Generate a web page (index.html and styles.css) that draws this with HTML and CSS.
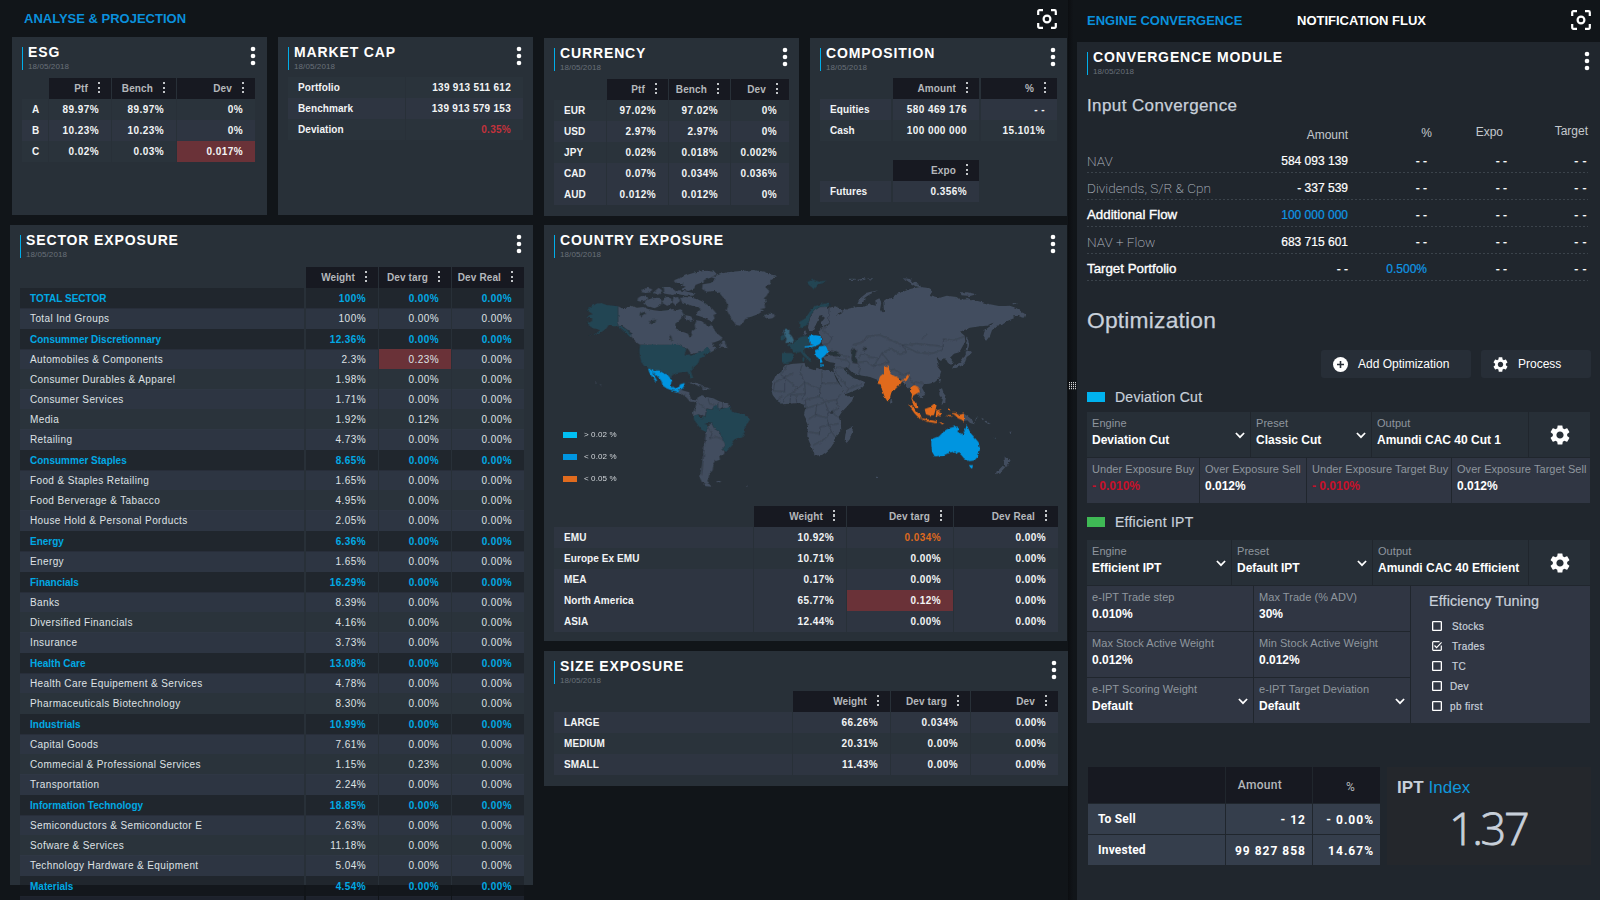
FILE: index.html
```html
<!DOCTYPE html>
<html lang="en">
<head>
<meta charset="utf-8">
<title>Analyse &amp; Projection</title>
<link rel="stylesheet" href="styles.css">
</head>
<body>
<svg class="defs" width="0" height="0" aria-hidden="true">
  <symbol id="focus" viewBox="0 0 20 20"><path d="M1.2 6V2.4A1.2 1.2 0 0 1 2.4 1.2H6M14 1.2h3.6a1.2 1.2 0 0 1 1.2 1.2V6M18.8 14v3.6a1.2 1.2 0 0 1-1.2 1.2H14M6 18.8H2.4a1.2 1.2 0 0 1-1.2-1.2V14" fill="none" stroke="#fff" stroke-width="2.2"/><circle cx="10" cy="10" r="3.4" fill="none" stroke="#fff" stroke-width="2.2"/></symbol>
  <symbol id="more" viewBox="0 0 6 20"><circle cx="3" cy="3" r="2.3" fill="#fff"/><circle cx="3" cy="10" r="2.3" fill="#fff"/><circle cx="3" cy="17" r="2.3" fill="#fff"/></symbol>
  <symbol id="gear" viewBox="2 2 20 20"><path fill="#fff" d="M19.14 12.94c.04-.3.06-.61.06-.94 0-.32-.02-.64-.07-.94l2.03-1.58c.18-.14.23-.41.12-.61l-1.92-3.32c-.12-.22-.37-.29-.59-.22l-2.39.96c-.5-.38-1.03-.7-1.62-.94l-.36-2.54c-.04-.24-.24-.41-.48-.41h-3.84c-.24 0-.43.17-.47.41l-.36 2.54c-.59.24-1.13.57-1.62.94l-2.39-.96c-.22-.08-.47 0-.59.22L2.74 8.87c-.12.21-.08.47.12.61l2.03 1.58c-.05.3-.09.63-.09.94s.02.64.07.94l-2.03 1.58c-.18.14-.23.41-.12.61l1.92 3.32c.12.22.37.29.59.22l2.39-.96c.5.38 1.03.7 1.62.94l.36 2.54c.05.24.24.41.48.41h3.84c.24 0 .44-.17.47-.41l.36-2.54c.59-.24 1.13-.56 1.62-.94l2.39.96c.22.08.47 0 .59-.22l1.92-3.32c.12-.22.07-.47-.12-.61l-2.01-1.58zM12 15.6c-1.98 0-3.6-1.62-3.6-3.6s1.62-3.6 3.6-3.6 3.6 1.62 3.6 3.6-1.62 3.6-3.6 3.6z"/></symbol>
  <symbol id="chev" viewBox="0 0 10 7"><path d="M.9 1 5 5.2 9.1 1" fill="none" stroke="#fff" stroke-width="1.7"/></symbol>
  <symbol id="box" viewBox="0 0 10 10"><rect x=".65" y=".65" width="8.7" height="8.7" rx=".6" fill="none" stroke="#fff" stroke-width="1.3"/></symbol>
  <symbol id="boxon" viewBox="0 0 10 10"><path d="M9.3 4.6v4.1a.6.6 0 0 1-.6.6H1.3a.6.6 0 0 1-.6-.6V1.3a.6.6 0 0 1 .6-.6h6.2M2.5 4.5 4.6 6.7 9.6 1.4" fill="none" stroke="#fff" stroke-width="1.2"/></symbol>
</svg>

<main class="left">
  <header class="top"><h1>ANALYSE &amp; PROJECTION</h1><svg class="focus"><use href="#focus"/></svg></header>
  <div class="cols">
    <div class="colA">
      <div class="pair pairA">
        <section class="panel esg">
          <div class="ph"><div class="tt"><h2>ESG</h2><p>18/05/2018</p></div><svg class="more"><use href="#more"/></svg></div>
          <div class="tbl">
            <div class="r hd"><span></span><span>Ptf<i></i></span><span>Bench<i></i></span><span>Dev<i></i></span></div>
            <div class="r d"><span>A</span><span>89.97%</span><span>89.97%</span><span>0%</span></div>
            <div class="r l"><span>B</span><span>10.23%</span><span>10.23%</span><span>0%</span></div>
            <div class="r d"><span>C</span><span>0.02%</span><span>0.03%</span><span class="alert">0.017%</span></div>
          </div>
        </section>
        <section class="panel mcap">
          <div class="ph"><div class="tt"><h2>MARKET CAP</h2><p>18/05/2018</p></div><svg class="more"><use href="#more"/></svg></div>
          <div class="tbl">
            <div class="r d"><span>Portfolio</span><span>139 913 511 612</span></div>
            <div class="r l"><span>Benchmark</span><span>139 913 579 153</span></div>
            <div class="r d"><span>Deviation</span><span class="neg">0.35%</span></div>
          </div>
        </section>
      </div>
      <section class="panel sector">
        <div class="ph"><div class="tt"><h2>SECTOR EXPOSURE</h2><p>18/05/2018</p></div><svg class="more"><use href="#more"/></svg></div>
        <div class="tbl">
          <div class="r hd"><span></span><span>Weight<i></i></span><span>Dev targ<i></i></span><span>Dev Real<i></i></span></div>
          <div class="r s"><span>TOTAL SECTOR</span><span>100%</span><span>0.00%</span><span>0.00%</span></div>
          <div class="r l"><span>Total Ind Groups</span><span>100%</span><span>0.00%</span><span>0.00%</span></div>
          <div class="r s"><span>Consummer Discretionnary</span><span>12.36%</span><span>0.00%</span><span>0.00%</span></div>
          <div class="r l"><span>Automobiles &amp; Components</span><span>2.3%</span><span class="alert">0.23%</span><span>0.00%</span></div>
          <div class="r d"><span>Consumer Durables &amp; Apparel</span><span>1.98%</span><span>0.00%</span><span>0.00%</span></div>
          <div class="r l"><span>Consumer Services</span><span>1.71%</span><span>0.00%</span><span>0.00%</span></div>
          <div class="r d"><span>Media</span><span>1.92%</span><span>0.12%</span><span>0.00%</span></div>
          <div class="r l"><span>Retailing</span><span>4.73%</span><span>0.00%</span><span>0.00%</span></div>
          <div class="r s"><span>Consummer Staples</span><span>8.65%</span><span>0.00%</span><span>0.00%</span></div>
          <div class="r l"><span>Food &amp; Staples Retailing</span><span>1.65%</span><span>0.00%</span><span>0.00%</span></div>
          <div class="r d"><span>Food Berverage &amp; Tabacco</span><span>4.95%</span><span>0.00%</span><span>0.00%</span></div>
          <div class="r l"><span>House Hold &amp; Personal Porducts</span><span>2.05%</span><span>0.00%</span><span>0.00%</span></div>
          <div class="r s"><span>Energy</span><span>6.36%</span><span>0.00%</span><span>0.00%</span></div>
          <div class="r l"><span>Energy</span><span>1.65%</span><span>0.00%</span><span>0.00%</span></div>
          <div class="r s"><span>Financials</span><span>16.29%</span><span>0.00%</span><span>0.00%</span></div>
          <div class="r l"><span>Banks</span><span>8.39%</span><span>0.00%</span><span>0.00%</span></div>
          <div class="r d"><span>Diversified Financials</span><span>4.16%</span><span>0.00%</span><span>0.00%</span></div>
          <div class="r l"><span>Insurance</span><span>3.73%</span><span>0.00%</span><span>0.00%</span></div>
          <div class="r s"><span>Health Care</span><span>13.08%</span><span>0.00%</span><span>0.00%</span></div>
          <div class="r l"><span>Health Care Equipement &amp; Services</span><span>4.78%</span><span>0.00%</span><span>0.00%</span></div>
          <div class="r d"><span>Pharmaceuticals Biotechnology</span><span>8.30%</span><span>0.00%</span><span>0.00%</span></div>
          <div class="r s"><span>Industrials</span><span>10.99%</span><span>0.00%</span><span>0.00%</span></div>
          <div class="r l"><span>Capital Goods</span><span>7.61%</span><span>0.00%</span><span>0.00%</span></div>
          <div class="r d"><span>Commecial &amp; Professional Services</span><span>1.15%</span><span>0.23%</span><span>0.00%</span></div>
          <div class="r l"><span>Transportation</span><span>2.24%</span><span>0.00%</span><span>0.00%</span></div>
          <div class="r s"><span>Information Technology</span><span>18.85%</span><span>0.00%</span><span>0.00%</span></div>
          <div class="r l"><span>Semiconductors &amp; Semiconductor E</span><span>2.63%</span><span>0.00%</span><span>0.00%</span></div>
          <div class="r d"><span>Sofware &amp; Services</span><span>11.18%</span><span>0.00%</span><span>0.00%</span></div>
          <div class="r l"><span>Technology Hardware &amp; Equipment</span><span>5.04%</span><span>0.00%</span><span>0.00%</span></div>
          <div class="r s"><span>Materials</span><span>4.54%</span><span>0.00%</span><span>0.00%</span></div>
          <div class="r l"><span></span><span></span><span></span><span></span></div>
        </div>
      </section>
    </div>

    <div class="colB">
      <div class="pair">
        <section class="panel cur">
          <div class="ph"><div class="tt"><h2>CURRENCY</h2><p>18/05/2018</p></div><svg class="more"><use href="#more"/></svg></div>
          <div class="tbl">
            <div class="r hd"><span></span><span>Ptf<i></i></span><span>Bench<i></i></span><span>Dev<i></i></span></div>
            <div class="r d"><span>EUR</span><span>97.02%</span><span>97.02%</span><span>0%</span></div>
            <div class="r l"><span>USD</span><span>2.97%</span><span>2.97%</span><span>0%</span></div>
            <div class="r d"><span>JPY</span><span>0.02%</span><span>0.018%</span><span>0.002%</span></div>
            <div class="r l"><span>CAD</span><span>0.07%</span><span>0.034%</span><span>0.036%</span></div>
            <div class="r l"><span>AUD</span><span>0.012%</span><span>0.012%</span><span>0%</span></div>
          </div>
        </section>
        <section class="panel comp">
          <div class="ph"><div class="tt"><h2>COMPOSITION</h2><p>18/05/2018</p></div><svg class="more"><use href="#more"/></svg></div>
          <div class="tbl">
            <div class="r hd"><span></span><span>Amount<i></i></span><span>%<i></i></span></div>
            <div class="r l"><span>Equities</span><span>580 469 176</span><span>- -</span></div>
            <div class="r d"><span>Cash</span><span>100 000 000</span><span>15.101%</span></div>
          </div>
          <div class="tbl expo">
            <div class="r hd"><span></span><span>Expo<i></i></span></div>
            <div class="r l"><span>Futures</span><span class="fut">0.356%</span></div>
          </div>
        </section>
      </div>

      <section class="panel country">
        <div class="ph"><div class="tt"><h2>COUNTRY EXPOSURE</h2><p>18/05/2018</p></div><svg class="more"><use href="#more"/></svg></div>
        <div class="map">
          <svg class="world" viewBox="0 0 1380 690">
            <filter id="coast" x="0" y="0" width="1" height="1"><feTurbulence type="fractalNoise" baseFrequency=".09" numOctaves="2" seed="4"/><feDisplacementMap in="SourceGraphic" scale="9" xChannelSelector="R" yChannelSelector="G"/></filter>
            <g filter="url(#coast)">
              <g class="land">
                <path d="M114 124 126 130 140 128 158 122 170 128 190 126 204 132 222 136 240 138 262 136 278 132 290 136 302 132 312 150 304 160 296 168 286 176 286 188 296 196 312 202 324 206 330 218 336 210 334 200 346 192 344 180 350 166 364 168 376 176 384 186 392 178 400 188 408 202 420 212 428 218 420 226 404 232 394 234 402 238 398 246 410 250 400 258 388 264 384 252 370 260 350 264 332 268 330 260 322 250 308 246 296 240 180 239 166 230 160 222 152 212 154 204 142 194 128 184 114 182Z"/>
                <path d="M422 236l10-10 6 12 4 12-12-2-10 0zM174 98 190 92 206 98 200 104 184 110 172 108ZM198 106 216 100 236 98 246 108 240 122 224 130 204 124 190 116ZM186 74 200 68 216 72 214 82 198 84 184 82ZM222 80l14-12 10 8-4 12-16 2zM250 66l20 0 14 10 10 10-16 4-24-4zM250 100l12-5 12 6 0 14-12 8-14-8zM282 46 300 38 320 30 346 22 376 17 404 20 410 28 392 38 374 44 362 54 346 60 344 70 326 78 306 74 316 64 300 62 310 54 290 54ZM284 80l16-4 20 4 26 4-6 8-24 0-20-4zM300 98 316 96 336 98 356 104 372 112 386 122 398 132 410 146 400 150 404 160 396 170 380 162 366 156 346 150 352 140 362 134 350 126 336 122 322 118 306 112ZM280 98l14-2 6 12-14 12-10-8zM314 150l18 4 10 10-14 4-14-8z"/>
                <path d="M368 58 392 54 406 42 394 36 420 28 440 22 480 18 520 15 556 20 560 26 580 30 592 34 572 40 570 56 556 66 568 78 560 92 552 100 558 110 554 120 556 130 540 132 552 136 534 148 512 156 500 158 488 172 480 182 468 180 456 164 448 150 440 136 444 122 438 110 428 96 418 84 404 78 380 80 366 72ZM552 150l8-4 20 0 6 6-8 8-14 2-8-4z"/>
                <path d="M292 380l10-6 12 4 14 4 0 12 6 10 14 2 8 2-4 8-10-6-12 0-10-12-14-10zM326 354l14-3 24 8 8 6-18-1-14-6zM366 366l22 2 4 5-24 0zM46 352l6 3 0 3-6-3zM56 358l8 4 0 3-6-4z"/>
                <path d="M352 398 366 390 378 396 400 400 416 408 428 412 444 418 450 426 440 432 428 426 416 434 402 424 396 434 380 430 376 450 372 456 356 448 340 456 338 442 346 430 350 412Z"/>
                <path d="M384 480 396 476 404 492 418 500 424 514 434 528 436 542 428 552 434 560 432 568 418 574 420 584 408 588 400 600 398 616 388 628 386 640 382 648 388 654 380 658 366 652 360 640 362 624 366 600 370 560 374 530 378 504ZM370 657l18 0 8 8-20-1zM410 648l12 0 0 4-12 0zM498 660l5 2-1 4-4-2z"/>
                <g transform="translate(570)">
                  <path d="M46 300 70 296 104 294 106 304 116 310 134 316 140 308 156 314 184 318 190 322 200 346 214 366 224 386 232 394 252 392 246 408 230 426 216 440 206 456 212 472 214 496 200 510 194 520 190 536 182 548 168 562 156 570 134 572 130 560 122 540 112 516 112 500 116 480 110 466 102 450 106 432 98 418 84 414 62 416 38 418 22 408 8 390 4 376 8 350 16 334 34 320 40 306ZM228 496l14-8 6-6 0 14-8 26-10 12-6-8 2-16z"/>
                  <path d="M116 176 122 152 134 136 150 126 166 122 178 130 182 160 176 176 158 184 154 172 164 160 156 150 148 152 142 170 134 186 128 198 118 198 114 188ZM98 202l8-6 4 10-8 6zM92 246l12-2 6 8-12 2zM118 232l14 4-12 6z"/>
                  <path d="M178 128 196 124 216 134 220 140 206 144 198 152 214 146 222 136 240 130 262 126 280 126 300 118 318 122 316 106 328 100 334 112 330 136 342 140 340 112 350 104 366 98 380 86 400 80 420 72 450 66 470 68 484 76 480 90 510 98 530 92 560 96 570 104 600 102 632 110 660 118 690 124 720 122 740 130 766 148 762 158 746 154 730 150 732 160 712 168 696 180 680 182 666 196 660 212 648 228 640 214 644 196 660 184 672 172 650 182 630 184 600 188 570 200 584 212 586 230 578 244 568 262 552 266 540 278 548 290 544 300 534 294 526 280 512 284 500 280 506 296 502 304 514 320 508 340 494 352 478 356 462 358 456 368 466 386 458 400 446 396 440 386 448 378 434 360 424 362 414 374 406 358 396 350 390 340 350 330 326 346 300 336 264 330 244 320 230 306 220 312 236 328 252 340 268 344 286 352 276 366 256 376 226 388 214 366 204 344 192 324 190 310 196 294 180 292 164 284 160 276 176 272 166 266 172 256 166 244 156 238 154 216 148 206 150 190 164 184 180 176Z"/>
                  <path d="M262 116 272 98 290 84 324 76 300 88 284 98 280 112 272 118ZM400 40l20 2 8 10 20 4 6 12-20-6-16-10zM572 82l20 0 28 6-20 5-26-2zM586 98l14 2-10 3zM234 41l20 0 0 4-20 0zM262 44l24-4 0 4-22 4zM290 40l20 0-6 4zM728 114l14 1 0 3-14 0zM0 34l18-4-12 14-6 0z"/>
                  <path d="M590 260l10-2 4 8-14 10-6 20-12 8-14 4-12 2 8-11 16-6 10-14zM588 214l7 12 2 16-4 14-6 4 2-20zM508 342l5 0-3 12-4-4zM508 372l8-2 6 16 6 8-2 18-12 4 4-10-10-16zM362 402l5 6-2 10-5-4zM582 446 596 456 606 464 614 478 600 474 592 466 582 468ZM614 458l12 0-10 6zM634 458l8 4-4 4zM646 466l16 10-6 2-12-8zM670 514l8 6-2 2zM718 500l8 0-4 8zM704 574l8 10 10 2-8 14-8 6-2-10zM698 602l8 4-14 16-14 6 2-6zM318 635l7 0 0 4-7 0z"/>
                </g>
              </g>
              <g class="teal">
                <path d="M20 135 30 133 24 128 40 122 48 116 64 114 80 120 114 124 114 182 128 186 142 196 154 210 150 216 138 204 126 192 112 184 96 184 86 180 80 190 66 200 50 208 24 212 46 206 60 196 50 192 38 190 28 182 24 174 36 168 36 160 20 158 28 150 38 148Z"/>
                <path d="M180 239 296 239 308 246 320 250 316 262 314 272 326 268 332 272 352 264 370 258 378 250 388 248 390 258 378 268 370 276 360 280 356 292 350 300 340 308 332 316 336 330 340 338 332 342 326 328 322 320 306 322 290 324 278 330 272 338 264 328 252 322 238 316 220 316 204 310 192 304 184 290 180 276 178 258Z"/>
                <path d="M340 452 354 448 360 456 374 456 362 466 372 476 384 480 382 496 380 502 364 494 352 478 342 464ZM376 456 380 432 398 434 402 422 414 420 416 434 430 430 444 428 450 422 456 440 474 444 490 448 506 456 510 464 500 478 494 488 494 504 486 518 470 520 460 530 456 542 446 552 438 562 428 552 438 540 430 528 424 512 418 500 404 492 396 476 382 474 372 478 362 466ZM602 214l10-6 4 8-6 10-8 0z"/>
                <g transform="translate(570)"><path d="M112 50 130 44 148 50 168 46 160 54 146 58 132 74 124 66 116 60ZM88 170 106 160 118 142 132 124 150 118 176 114 182 120 166 126 150 126 134 136 122 150 116 170 110 180 98 190 88 186ZM92 216 106 212 118 216 118 236 108 244 100 258 86 262 70 262 66 250 50 240 66 236 78 228 84 220ZM36 264l30 0 6 8-8 18-14 4-14-2zM88 256 102 252 104 264 118 278 124 282 120 290 112 282 100 272 94 264ZM98 276l6 2-2 12-5-2z"/></g>
              </g>
              <path class="uk" d="M610 196l8-6 12 6-4 8 10 10 6 12-4 6-22 2 4-12-6-10z"/>
              <g class="sea"><path d="M742 260 756 256 770 262 786 272 766 274 746 270ZM812 256 824 250 832 256 828 264 826 276 832 286 832 296 818 294 814 280 816 270ZM178 146l16-6 4 6-14 8zM206 170l22-6-4 8-16 4zM268 210l6 4 2 14-6-8zM848 250l8-4 4 8-8 2zM750 440l10-4 4 8-12 4z"/></g>
              <g class="blue">
                <path d="M204 310 220 316 238 316 250 324 262 328 270 338 276 348 272 356 276 366 286 370 296 368 300 358 314 354 312 364 306 372 298 376 292 380 276 376 260 370 248 362 244 348 236 338 226 328 220 320 224 334 232 348 228 350 216 336 208 322Z"/>
                <g transform="translate(570)"><path d="M118 212 136 210 152 214 154 230 148 238 140 242 122 248 104 248 104 244 118 242 132 238 118 232ZM148 244 164 242 174 256 168 268 160 276 154 280 158 292 150 294 146 280 138 274 134 256 144 252ZM150 298l12 1 0 4-12-1z"/>
                <path d="M484 522 500 516 514 510 522 498 536 490 544 488 556 484 568 486 562 500 578 508 584 498 590 480 596 492 602 504 614 518 626 532 630 552 624 574 614 586 598 588 582 580 572 568 566 566 556 560 540 562 520 572 494 574 486 560 484 540ZM597 600l12 0-2 10-7 1z"/></g>
              </g>
              <g class="orange" transform="translate(570)"><path d="M342 304 356 302 358 318 368 330 388 340 392 348 404 340 414 328 420 330 408 350 400 344 392 356 376 372 364 382 360 398 352 408 344 396 336 374 332 358 322 356 326 346 330 334 342 324ZM422 364 434 360 448 368 450 380 436 388 430 392 426 404 440 414 442 430 432 424 424 404 426 388 420 376ZM414 418 430 426 444 444 456 458 450 462 434 446ZM452 459 474 463 500 469 500 475 470 470ZM504 472l20 1-6 5zM464 432 480 426 494 414 500 420 496 436 492 450 480 452 468 448ZM499 436l16-3-8 9 8 4-6 9-6-5-2 8-4 0zM534 430l4 2 0 8-4-2zM530 450l14 0 0 4-14 0zM546 444l12 0 8 6 16-4 0 24-8-6-10-4-8-8z"/></g>
              <g class="border"><path d="M378 504 374 540 370 590 366 630M388 520l22-4 20 8M384 486l12 20-6 16M416 410l-4 18M428 412l0 16M384 398l4 18 20 4M356 412l20 18M318 386l-8 8"/>
              <g transform="translate(570)"><path d="M50 300 44 316 32 328 84 370M70 324 14 352 10 378 44 380 44 336M84 370 66 384 46 394 40 412M84 370 104 352 90 320 96 300M104 352 150 372 156 356 156 316M156 354 206 354M104 352 106 386 96 404M106 386 62 390 60 414M150 372 148 394 106 404M148 394 164 410 200 404 212 386M106 404 108 430 140 420 164 412M140 420 136 450 116 462M136 450 170 458 176 440 166 414M170 458 176 480 150 486 148 510M112 500 150 506M176 480 206 476M176 480 184 500 166 520 150 530 130 540M184 500 196 516M176 440 206 456M200 404 206 430 184 440M22 408 36 392M78 392 80 414M200 306 226 310 240 330M200 306 196 320 236 372 276 356M236 372 228 384M238 296 236 310M264 330 272 310 262 292 290 290 310 304 340 296 358 292 336 264 364 250 390 268 410 262 396 240 440 236 480 240 520 244 520 222 550 226 584 214M396 240 440 262 480 266 516 256 520 244M396 240 360 224 330 210 290 214 280 230 248 240M310 304 326 280 296 276 280 264 264 280M326 280 336 264M358 318 372 312 400 330 420 322M414 328 424 344 432 360M432 350 462 356M176 128 176 176M150 190 170 188M156 196 172 204 186 220 176 236 156 240M330 136 342 140M196 280 232 286 240 296M216 272 240 276M456 222l14-14M444 368l10 14"/></g></g>
            </g>
          </svg>
          <ul class="legend"><li><i class="k1"></i>&gt; 0.02 %</li><li><i class="k2"></i>&lt; 0.02 %</li><li><i class="k3"></i>&lt; 0.05 %</li></ul>
        </div>
        <div class="tbl">
          <div class="r hd"><span></span><span>Weight<i></i></span><span>Dev targ<i></i></span><span>Dev Real<i></i></span></div>
          <div class="r l"><span>EMU</span><span>10.92%</span><span class="warn">0.034%</span><span>0.00%</span></div>
          <div class="r d"><span>Europe Ex EMU</span><span>10.71%</span><span>0.00%</span><span>0.00%</span></div>
          <div class="r l"><span>MEA</span><span>0.17%</span><span>0.00%</span><span>0.00%</span></div>
          <div class="r l"><span>North America</span><span>65.77%</span><span class="alert">0.12%</span><span>0.00%</span></div>
          <div class="r l"><span>ASIA</span><span>12.44%</span><span>0.00%</span><span>0.00%</span></div>
        </div>
      </section>

      <section class="panel size">
        <div class="ph"><div class="tt"><h2>SIZE EXPOSURE</h2><p>18/05/2018</p></div><svg class="more"><use href="#more"/></svg></div>
        <div class="tbl">
          <div class="r hd"><span></span><span>Weight<i></i></span><span>Dev targ<i></i></span><span>Dev<i></i></span></div>
          <div class="r l"><span>LARGE</span><span>66.26%</span><span>0.034%</span><span>0.00%</span></div>
          <div class="r d"><span>MEDIUM</span><span>20.31%</span><span>0.00%</span><span>0.00%</span></div>
          <div class="r l"><span>SMALL</span><span>11.43%</span><span>0.00%</span><span>0.00%</span></div>
        </div>
      </section>
    </div>
  </div>
</main>

<div class="split"><i></i></div>

<aside class="right">
  <nav class="tabs"><span class="on">ENGINE CONVERGENCE</span><span>NOTIFICATION FLUX</span><svg class="focus"><use href="#focus"/></svg></nav>
  <section class="module">
    <div class="ph"><div class="tt"><h2>CONVERGENCE MODULE</h2><p>18/05/2018</p></div><svg class="more"><use href="#more"/></svg></div>
    <h3 class="input">Input Convergence</h3>
    <div class="ic">
      <div class="ir ih"><span></span><span>Amount</span><span>%</span><span>Expo</span><span>Target</span></div>
      <div class="ir"><span class="thin">NAV</span><span>584 093 139</span><span>- -</span><span>- -</span><span>- -</span></div>
      <div class="ir"><span class="thin">Dividends, S/R &amp; Cpn</span><span>- 337 539</span><span>- -</span><span>- -</span><span>- -</span></div>
      <div class="ir"><span>Additional Flow</span><span class="bl">100 000 000</span><span>- -</span><span>- -</span><span>- -</span></div>
      <div class="ir"><span class="thin">NAV + Flow</span><span>683 715 601</span><span>- -</span><span>- -</span><span>- -</span></div>
      <div class="ir"><span>Target Portfolio</span><span>- -</span><span class="bl">0.500%</span><span>- -</span><span>- -</span></div>
    </div>
    <h3 class="opt">Optimization</h3>
    <div class="btns">
      <button class="add"><svg viewBox="0 0 15 15"><circle cx="7.5" cy="7.5" r="7.5" fill="#fff"/><path d="M7.5 4v7M4 7.5h7" stroke="#272e37" stroke-width="1.6"/></svg>Add Optimization</button>
      <button class="proc"><svg><use href="#gear"/></svg>Process</button>
    </div>
    <h4><i class="sw1"></i>Deviation Cut</h4>
    <div class="f dark c4a">
      <div><label>Engine</label><b>Deviation Cut</b><svg class="chev"><use href="#chev"/></svg></div>
      <div><label>Preset</label><b>Classic Cut</b><svg class="chev"><use href="#chev"/></svg></div>
      <div><label>Output</label><b>Amundi CAC 40 Cut 1</b></div>
      <div class="g"><svg><use href="#gear"/></svg></div>
    </div>
    <div class="f lite c4b">
      <div><label>Under Exposure Buy</label><b class="red">- 0.010%</b></div>
      <div><label>Over Exposure Sell</label><b>0.012%</b></div>
      <div><label>Under Exposure Target Buy</label><b class="red">- 0.010%</b></div>
      <div><label>Over Exposure Target Sell</label><b>0.012%</b></div>
    </div>
    <h4 class="second"><i class="sw2"></i>Efficient IPT</h4>
    <div class="f dark c4c">
      <div><label>Engine</label><b>Efficient IPT</b><svg class="chev"><use href="#chev"/></svg></div>
      <div><label>Preset</label><b>Default IPT</b><svg class="chev"><use href="#chev"/></svg></div>
      <div><label>Output</label><b>Amundi CAC 40 Efficient</b></div>
      <div class="g"><svg><use href="#gear"/></svg></div>
    </div>
    <div class="ipt">
      <div class="f lite c2">
        <div><label>e-IPT Trade step</label><b>0.010%</b></div>
        <div><label>Max Trade (% ADV)</label><b>30%</b></div>
        <div><label>Max Stock Active Weight</label><b>0.012%</b></div>
        <div><label>Min Stock Active Weight</label><b>0.012%</b></div>
        <div><label>e-IPT Scoring Weight</label><b>Default</b><svg class="chev"><use href="#chev"/></svg></div>
        <div><label>e-IPT Target Deviation</label><b>Default</b><svg class="chev"><use href="#chev"/></svg></div>
      </div>
      <div class="tune">
        <h5>Efficiency Tuning</h5>
        <p><svg><use href="#box"/></svg>Stocks</p>
        <p><svg><use href="#boxon"/></svg>Trades</p>
        <p><svg><use href="#box"/></svg>TC</p>
        <p class="nr"><svg><use href="#box"/></svg>Dev</p>
        <p class="nr"><svg><use href="#box"/></svg>pb first</p>
      </div>
    </div>
    <div class="bottom">
      <div class="sell">
        <span class="th"></span><span class="th am">Amount</span><span class="th pc">%</span>
        <span class="nm">To Sell</span><span>- 12</span><span>- 0.00%</span>
        <span class="nm">Invested</span><span>99 827 858</span><span>14.67%</span>
      </div>
      <div class="index"><p><b>IPT</b> Index</p><strong>1.37</strong></div>
    </div>
  </section>
</aside>
</body>
</html>
```

FILE: styles.css
```css
* { box-sizing: border-box; margin: 0; padding: 0; }
body {
  width: 1600px; height: 900px; overflow: hidden; display: flex;
  background: #111519; color: #fff;
  font-family: "Liberation Sans", Arial, Helvetica, sans-serif;
}
svg { display: block; }
.defs { position: absolute; }
.focus { width: 20px; height: 20px; }

.left { width: 1068px; height: 900px; }
.top { height: 37px; display: flex; justify-content: space-between; align-items: center; padding: 0 11px 0 24px; }
.top h1 { font-size: 13px; font-weight: 700; color: #0a90dc; }
.cols { display: flex; gap: 11px; padding-left: 10px; }
.colA { width: 523px; }
.colB { width: 524px; padding-top: 1px; }
.pair { display: flex; gap: 11px; height: 178px; }
.pairA { padding-left: 2px; }

.panel { background: #283038; }
.ph { height: 40px; padding-top: 10px; display: flex; justify-content: space-between; }
.tt { margin-left: 10px; padding-left: 5px; height: 23px; border-left: 1px solid #00aeea; }
.tt h2 { font-size: 14px; line-height: 14px; margin-top: -2px; letter-spacing: .87px; font-weight: 700; white-space: nowrap; }
.tt p { margin-top: 4px; font-size: 8px; line-height: 8px; letter-spacing: .1px; color: #68707a; }
.more { width: 6px; height: 20px; margin: -1px 11px 0 0; }

.tbl { margin-left: 10px; font-size: 10px; font-weight: 700; letter-spacing: .42px; color: #f2f4f5; }
.r { display: grid; grid-template-columns: var(--cols); column-gap: 1px; height: 20px; line-height: 21px; white-space: nowrap; }
.r + .r { margin-top: 1px; }
.r span { text-align: right; padding-right: 12px; }
.r span:first-child { text-align: left; padding-left: 10px; padding-right: 0; letter-spacing: .08px; }
.d span { background: #2a333b; }
.l span { background: #2e3541; }
.hd span:not(:first-child) { background: #171921; color: #b4b7bb; display: flex; justify-content: flex-end; align-items: center; padding-right: 11px; letter-spacing: .12px; }
.hd i { width: 2px; height: 11px; margin: -2px 0 0 10px; background: repeating-linear-gradient(#c3c6c9 0 2px, transparent 2px 4.5px); }
.r .alert { background: #6a3238; }
.r .neg { color: #c3323c; }
.r .warn { color: #dd691f; }

.esg { width: 255px; }
.esg .tbl { --cols: 26px 62px 64px 78px; margin-top: 1px; }
.mcap { width: 255px; }
.mcap .tbl { --cols: 117px 117px; letter-spacing: .28px; }
.cur { width: 255px; }
.cur .tbl { --cols: 52px 61px 61px 58px; margin-top: 1px; }
.comp { width: 257px; }
.comp .tbl { --cols: 71px 86px 76px; }
.comp .r { column-gap: 2px; }
.comp .tbl.expo { margin-top: 20px; }

.sector { margin-top: 10px; height: 660px; }
.sector .tbl { --cols: 285px 72px 72px 72px; padding-top: 2px; font-weight: 400; letter-spacing: .45px; color: #dfe2e5; }
.sector .r span:first-child { margin-right: 1px; letter-spacing: .38px; }
.sector .r + .r { margin-top: 0; }
.sector .r + .s { margin-top: 1px; }
.sector .hd { font-weight: 700; }
.s { font-weight: 700; letter-spacing: .4px; color: #00a9e4; }
.s span { background: rgba(23, 26, 33, .45); }
.sector .s span:first-child { letter-spacing: 0; }
.sector .l span:not(.alert) { background: rgba(60, 66, 88, .3); }

.country { margin-top: 9px; width: 523px; height: 416px; }
.map { position: relative; height: 241px; padding-left: 36px; }
.world { width: 460px; height: 230px; }
.land { fill: #424d5e; }
.teal { fill: #244452; }
.uk { fill: #36637a; }
.sea { fill: #283038; }
.blue { fill: #0095e0; }
.orange { fill: #e16b1e; }
.border { fill: none; stroke: #333d4a; stroke-width: 2; }
.legend { position: absolute; left: 19px; top: 164px; list-style: none; font-size: 8px; line-height: 12px; letter-spacing: .1px; color: #d2d6da; }
.legend li { display: flex; align-items: center; height: 12px; margin-bottom: 10px; }
.legend i { width: 14px; height: 6px; margin-right: 7px; }
.k1 { background: #00bff3; }
.k2 { background: #0095e0; }
.k3 { background: #e16b1e; }
.country .tbl { --cols: 199px 92px 106px 104px; }
.size { margin-top: 10px; height: 135px; }
.size .tbl { --cols: 238px 97px 79px 87px; }

.split { width: 9px; background: linear-gradient(90deg, #0c0e11, #111519 60%); padding-top: 382px; }
.split i { display: block; width: 7px; height: 8px; margin-left: 1px;
  background: repeating-linear-gradient(90deg, transparent 0 1px, #111519 1px 2px), repeating-linear-gradient(#d4d4d4 0 1px, #3a3d41 1px 2px); }

.right { width: 523px; }
.tabs { height: 42px; display: flex; align-items: center; padding: 0 9px 2px 10px; font-size: 13px; font-weight: 700; }
.tabs .on { width: 210px; color: #0a90dc; }
.tabs .focus { margin-left: auto; }
.module { height: 858px; background: #20262d; padding-right: 9px; }
.module .ph { margin-right: -9px; }
.module .more { margin-right: 10px; }
h3 { font-weight: 400; color: #c8d0da; margin-left: 10px; white-space: nowrap; -webkit-text-stroke: .25px #c8d0da; }
.input { font-size: 17px; line-height: 20px; margin-top: 14px; letter-spacing: .4px; }
.ic { margin: 8px 3px 0 10px; font-size: 12px; }
.ir { display: grid; grid-template-columns: 161px 100px 79px 80px 80px; height: 27px; padding-bottom: 5px; align-items: end; line-height: 14px; text-align: right; white-space: nowrap;
  background: repeating-linear-gradient(90deg, #3b434b 0 2px, transparent 2px 4px) bottom / 100% 1px no-repeat; }
.ir span { -webkit-text-stroke: .2px currentColor; }
.ir span:first-child { text-align: left; font-size: 13.3px; -webkit-text-stroke-width: .35px; }
.ir span:last-child { letter-spacing: .5px; }
.ir span.thin:first-child { font-family: Roboto, "Liberation Sans", sans-serif; font-weight: 200; font-size: 13.6px; color: #b4bac1; -webkit-text-stroke-width: 0; }
.ir .bl { color: #0f97e4; }
.ir.ih { height: 22px; background: none; color: #c4c9ce; padding-bottom: 5px; }
.ir.ih span { -webkit-text-stroke-width: 0; }
.ir.ih span:nth-child(3) { margin-right: -5px; padding-bottom: 2px; }
.ir.ih span:nth-child(4) { margin-right: 4px; padding-bottom: 3px; }
.ir.ih span:nth-child(5) { letter-spacing: 0; margin-right: -1px; padding-bottom: 4px; }
.opt { font-size: 22.8px; line-height: 26px; margin-top: 26px; letter-spacing: .2px; }
.btns { display: flex; justify-content: flex-end; gap: 10px; margin-top: 17px; }
button { height: 28px; border: 0; border-radius: 3px; background: #272e37; color: #fff; font: 12px "Liberation Sans", Arial, sans-serif; display: flex; align-items: center; padding-left: 12px; gap: 10px; }
button svg { width: 15px; height: 15px; }
.add { width: 150px; }
.proc { width: 110px; }
h4 { display: flex; align-items: center; gap: 10px; margin: 11px 0 7px 10px; height: 16px; font-size: 14px; font-weight: 400; letter-spacing: .25px; color: #c8d0da; -webkit-text-stroke: .2px #c8d0da; }
h4 i { width: 18px; height: 10px; }
.sw1 { background: #00b2ee; }
.sw2 { background: #3fb955; }
.second { margin-top: 11px; margin-bottom: 10px; }
.f { display: grid; gap: 1px; margin-left: 10px; }
.f > div { position: relative; height: 45px; padding: 5px 0 0 5px; white-space: nowrap; }
.dark > div { background: #272f37; }
.lite > div { background: #303643; }
.f label { display: block; font-size: 11px; line-height: 13px; letter-spacing: .05px; color: #8f969e; }
.f b { display: block; font-size: 12px; line-height: 14px; margin-top: 3px; }
.f .red { color: #c8102a; }
.chev { position: absolute; right: 5px; top: 20px; width: 10px; height: 7px; }
.f .g { padding: 13px 0 0 21px; }
.g svg { width: 20px; height: 20px; }
.c4a { grid-template-columns: 163px 120px 156px 61px; }
.c4b { grid-template-columns: 112px 106px 144px 138px; margin-top: 1px; }
.c4c { grid-template-columns: 144px 140px 155px 61px; }
.ipt { display: flex; gap: 1px; margin-top: 1px; }
.c2 { grid-template-columns: 166px 156px; }
.tune { width: 179px; height: 137px; background: #303643; padding: 7px 0 0 21px; color: #c8d0da; }
.tune h5 { font-size: 14.4px; line-height: 16px; font-weight: 400; margin: 0 0 7px -3px; letter-spacing: .1px; -webkit-text-stroke: .2px #c8d0da; }
.tune p { display: flex; align-items: center; gap: 10px; height: 20px; font-size: 10px; letter-spacing: .35px; -webkit-text-stroke: .2px #c8d0da; }
.tune p svg { width: 10px; height: 10px; }
.tune .nr { gap: 8px; }
.bottom { display: flex; margin: 44px 0 0 11px; }
.sell { display: grid; grid-template-columns: 137px 86px 67px; grid-template-rows: 36px 30px 30px; gap: 1px; width: 292px; font: 700 12px Roboto, sans-serif; letter-spacing: 1px; }
.sell span { background: #353e4c; display: flex; align-items: center; justify-content: flex-end; padding: 2px 6px 0 0; }
.sell .th { background: #171921; color: #b4b7bb; font-weight: 500; letter-spacing: .3px; }
.sell .am { padding: 0 30px 0 0; }
.sell .pc { padding: 4px 25px 0 0; font-weight: 400; }
.sell .nm { justify-content: flex-start; padding: 0 0 0 10px; letter-spacing: .2px; }
.index { width: 205px; height: 98px; margin-left: 7px; background: #24272c; padding: 11px 0 0 10px; color: #c8d0da; }
.index p { font-size: 17px; line-height: 20px; color: #0f97dc; letter-spacing: .05px; }
.index b { color: #c8d0da; }
.index strong { display: block; font: 300 45px/50px "Open Sans", sans-serif; margin: 5px 0 0 52px; letter-spacing: -2.4px; -webkit-text-stroke: .8px #c8d0da; }
```
